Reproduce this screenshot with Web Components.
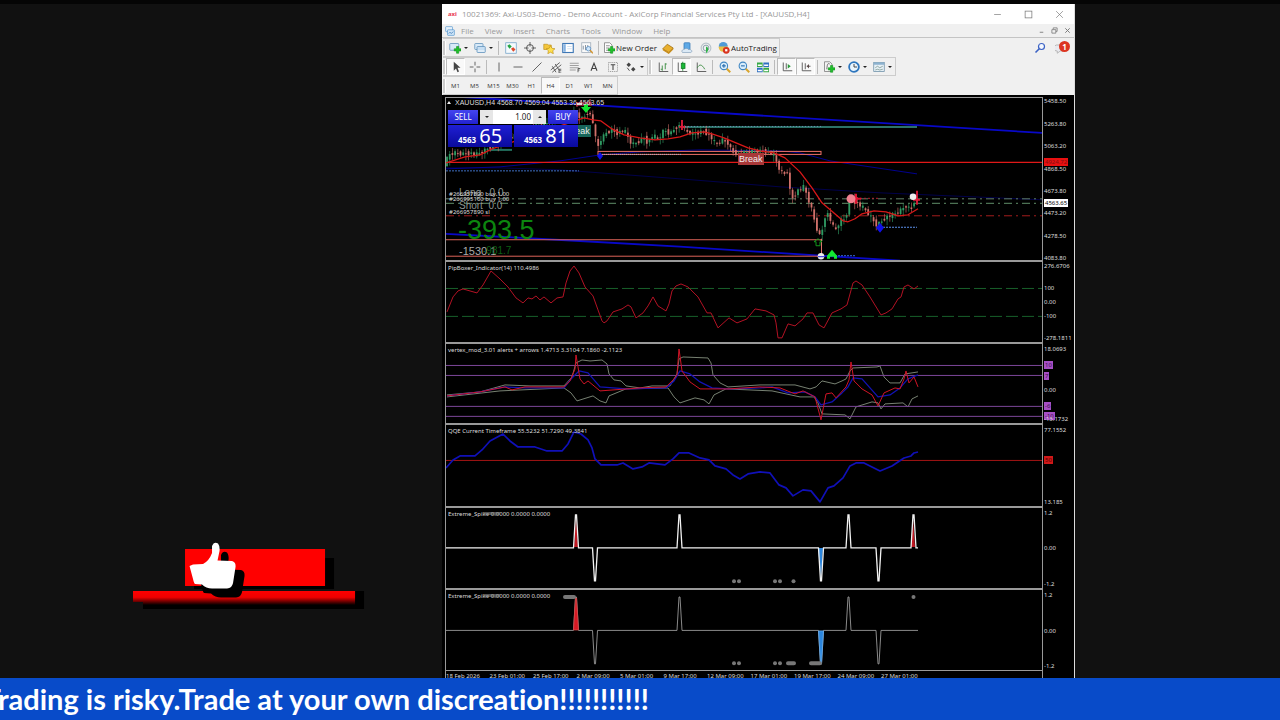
<!DOCTYPE html>
<html lang="en">
<head>
<meta charset="utf-8">
<title>Trading stream</title>
<style>
html,body{margin:0;height:100%;background:#111}
body{font-family:"Noto Sans","Open Sans",sans-serif;overflow:hidden}
</style>
</head>
<body>
<stream-scene></stream-scene>
<script>
const define = (name, html, setup) => {
  const tpl = document.createElement('template');
  tpl.innerHTML = html;
  customElements.define(name, class extends HTMLElement {
    connectedCallback() {
      if (this.shadowRoot) return;
      this.attachShadow({mode: 'open'}).append(tpl.content.cloneNode(true));
      if (setup) setup(this, this.shadowRoot);
    }
  });
};

/* ---------- icons, all on a 16 unit grid ---------- */
const plus = '<path d="M10 6h3v3h3v3h-3v3h-3v-3H7V9h3z" fill="#1fc02a" stroke="#0b8a17" stroke-width=".7"/>';
const line = (d, c = '#555', w = 1.2) => `<path d="${d}" fill="none" stroke="${c}" stroke-width="${w}"/>`;
const ICONS = {
  app: '<rect x="1" y="1" width="11" height="8" rx="1" fill="#e8f2fb" stroke="#4a90cc"/><rect x="4" y="6" width="11" height="9" rx="1" fill="#cfe4f7" stroke="#4a90cc"/>' + line('M6 12l2-2 2 2 3-3', '#2a6fb0'),
  newchart: '<rect x="1" y="2" width="12" height="9" rx="1" fill="#d7e9f8" stroke="#5b8db8"/>' + plus,
  profiles: '<rect x="1" y="2" width="11" height="8" rx="1" fill="#d7e9f8" stroke="#5b8db8"/><rect x="4" y="6" width="11" height="8" rx="1" fill="#c6def3" stroke="#5b8db8"/>' + line('M5 12h9', '#fff'),
  market: '<rect x="1" y="1" width="14" height="14" fill="#f5fafd" stroke="#6fa0c8"/><path d="M3 5l3-2 3 3-3 3z" fill="#26a544"/><path d="M8 9l3-2 3 3-3 3z" fill="#e04a2a"/>',
  navigator: '<circle cx="8" cy="8" r="4.6" fill="none" stroke="#555" stroke-width="1.3"/>' + line('M8 0v6M8 10v6M0 8h6M10 8h6'),
  star: '<path d="M1 3h5l1 1h4v6H1z" fill="#f4c63d" stroke="#b98a12" stroke-width=".8"/><path d="M10 5l2 3.4 4 .6-3 2.6.8 4-3.8-2-3.600 2 .8-4-3-2.600 4-.6z" fill="#ffe04d" stroke="#b98a12" stroke-width=".8"/>',
  terminal: '<rect x="1" y="2" width="14" height="12" fill="#fff" stroke="#3f78b5" stroke-width="1.500"/><path d="M2 3h3v10H2z" fill="#86b3e2"/>' + line('M7 6h6M7 9h6', '#b9cfe6', .8),
  tester: '<rect x="1" y="1" width="12" height="13" fill="#fafafa" stroke="#9aa7b5"/>' + line('M3 10V5M6 11V4M9 8V4', '#7a8a9a') + '<circle cx="10" cy="9" r="3" fill="#cfe6fa" stroke="#4d86bd"/>' + line('M12 11l4 4', '#d0932e', 2),
  order: '<path d="M2 1h7l3 3v10H2z" fill="#fff" stroke="#777"/>' + line('M4 5h5M4 8h5M4 11h3', '#888') + plus,
  book: '<path d="M1 9l6-6 8 5-6 6z" fill="#e9b02e" stroke="#9c6b0d"/><path d="M1 9v2l8 5 6-6V8l-6 6z" fill="#c98b17"/>',
  server: '<rect x="4" y="1" width="8" height="9" rx="1" fill="#5ea9e6" stroke="#3778b5"/><path d="M2 14c-2-2 0-4 2-4 1-2 5-2 6 0 4-1 6 3 3 4z" fill="#dbe9f5" stroke="#7796b4" stroke-width=".8"/>',
  signal: '<circle cx="8" cy="8" r="6.500" fill="none" stroke="#b7c2c9" stroke-width="1.500"/><circle cx="8" cy="8" r="3.800" fill="none" stroke="#8aa0ac" stroke-width="1.300"/><path d="M8 6c4 1 4 6 0 9z" fill="#32b34a"/>',
  auto: '<circle cx="7" cy="7" r="6" fill="#e9c045"/><path d="M1 6a6 6 0 0 1 12 0z" fill="#4e9bd8"/><circle cx="11" cy="11" r="4.500" fill="#d9341f"/><path d="M9.500 9.500h3v3h-3z" fill="#fff"/>',
  cursor: '<path d="M5 1v12l3-3 2 5 2-1-2-5h4z" fill="#444"/>',
  cross: line('M8 1v5M8 10v5M1 8h5M10 8h5'),
  vline: line('M8 2v12'), hline: line('M2 8h12'), trend: line('M2 14L14 2'),
  channel: line('M1 12L13 2M3 15L15 5M3 7l5 8M7 4l5 8') + line('M12 11h3M12 13h3M12 11v5h3'),
  fibo: line('M1 3h12M1 6h12M1 9h12M1 12h8', '#777', .9) + line('M12 15v-5h3M12 12h2'),
  text: line('M4 13L8 3l4 10M5.500 10h5', '#444', 1.500),
  label: '<rect x="2" y="2" width="12" height="12" fill="none" stroke="#888" stroke-dasharray="1.500 1"/>' + line('M5 5h6M8 5v7', '#444', 1.400),
  shapes: '<path d="M2 5l3-3 3 3-3 3zM8 11l3-3 3 3-3 3z" fill="#444"/>' + line('M3 9l3 4', '#444'),
  bars: line('M3 2v12h12') + line('M7 6v7M11 3v8M11 4h2M5 11h2', '#388a3d'),
  candles: line('M3 2v12h12') + line('M9 1v12', '#16892a') + '<rect x="7" y="3" width="5" height="7" fill="#18b835" stroke="#0d7a20"/>',
  area: line('M3 2v12h12') + line('M3 9c3-5 6-5 10 2', '#388a3d'),
  zoomin: line('M10 10l5 5', '#d9a52d', 2.600) + '<circle cx="6.500" cy="6.500" r="5" fill="#d8edfb" stroke="#3f86c2" stroke-width="1.400"/>' + line('M4 6.500h5M6.500 4v5', '#2a6fb0', 1.500),
  zoomout: line('M10 10l5 5', '#d9a52d', 2.600) + '<circle cx="6.500" cy="6.500" r="5" fill="#d8edfb" stroke="#3f86c2" stroke-width="1.400"/>' + line('M4 6.500h5', '#2a6fb0', 1.500),
  tile: '<path d="M0 2h7.500v6H0zM8.500 9H16v6H8.500z" fill="#36a845"/><path d="M8.500 2H16v6H8.500zM0 9h7.500v6H0z" fill="#2f6fc0"/><path d="M1 4.500h5.500v2H1zM9.500 4.500H15v2H9.500zM1 11.500h5.500v2H1zM9.500 11.500H15v2H9.500z" fill="#fff"/>',
  scroll: line('M3 2v11h12M7 3v8') + '<path d="M9 4l4 3-4 3z" fill="#2b9a3b"/>',
  shift: line('M3 2v11h12M7 3v8M14 7h-5') + '<path d="M12 4l-3 3 3 3z" fill="#5d4a4a"/>',
  indicators: '<path d="M2 1h7l3 3v10H2z" fill="#f4f4f4" stroke="#777"/>' + line('M5 11c1-8 1-8 4-7', '#666') + plus,
  clock: '<circle cx="8" cy="8" r="6.500" fill="#eaf5fd" stroke="#2c75bd" stroke-width="2.400"/>' + line('M8 4v4h4', '#333'),
  template: '<rect x="1" y="2" width="14" height="12" fill="#e6f0f6" stroke="#6a8ca5"/><path d="M1 2h14v3H1z" fill="#8cb2cf"/>' + line('M3 9l3-2 3 2 4-2M3 12l3-1 3 1 4-1', '#6c8b80', .9),
  search: '<circle cx="10" cy="6" r="4" fill="#f4f8ff" stroke="#3b62c4" stroke-width="1.600"/>' + line('M7 9l-5 5', '#3b62c4', 2.200),
  chat: '<path d="M2 4h9a3 3 0 0 1 0 8H7l-4 3v-3a4 4 0 0 1-1-8z" fill="#e9e9ee" stroke="#aaa"/>',
  min: line('M2 8h12', '#777'), max: '<rect x="2" y="2" width="12" height="12" fill="none" stroke="#777" stroke-width="1.300"/>',
  close: line('M2 2l12 12M14 2L2 14', '#777'), cmin: line('M4 12h8', '#777', 2),
  crest: line('M5 5V2h9v8h-3M2 6h9v8H2z', '#777', 1.800), cclose: line('M3 3l10 10M13 3L3 13', '#777', 2.200)
};
define('mt-icon', `<style>:host{display:block;width:12px;height:12px;flex:none}svg{display:block;width:100%;height:100%}</style><svg viewBox="0 0 16 16" aria-hidden="true"></svg>`,
  (el, r) => { r.querySelector('svg').innerHTML = ICONS[el.getAttribute('name')] || ''; });

/* ---------- toolbar parts ---------- */
define('tool-button', `<style>
:host{display:block;height:100%;flex:none;box-sizing:border-box}
button{all:unset;box-sizing:border-box;display:flex;align-items:center;justify-content:center;min-width:19px;height:100%;font-size:8px;line-height:12px;color:#222;white-space:nowrap}
:host([wide]) button{padding:0 2px;gap:1px}
:host([menu]) button{width:25px;gap:3px}
:host([frame]) button{font-size:6px;color:#333;font-weight:500}
:host([pressed]) button{background:#f9f9f9;border:1px solid #bbb;border-right-color:#fff;border-bottom-color:#fff}
i{display:none;border:2px solid transparent;border-top-color:#222;border-bottom:0}
:host([menu]) i{display:block}
</style><button type="button"><slot></slot><i></i></button>`,
  (el, r) => {
    const n = el.getAttribute('icon');
    if (!n) return;
    const icon = document.createElement('mt-icon');
    icon.setAttribute('name', n);
    r.querySelector('button').prepend(icon);
    if (!el.textContent) r.querySelector('button').setAttribute('aria-label', n);
  });
define('tool-gap', `<style>:host{display:flex;width:5px;height:14px;justify-content:center;flex:none}b{width:1px;background:#bbb}:host([grip]) b{width:2px;background:#ccc;border-right:1px solid #fff}:host([slim]){width:3px}</style><b></b>`);

define('window-head', `<style>
:host{display:block;background:#f0f0f0;color:#999;font-family:"Open Sans","Noto Sans",sans-serif}
header{display:flex;align-items:center;height:20px;background:#fff;font-size:8px;line-height:12px;padding:0 10px 0 6px;gap:5px}
header em{font:bold 6px/8px "Open Sans",sans-serif;color:#e8344e}
header span{flex:1;white-space:nowrap}
.ctl{display:flex;gap:22px}.ctl mt-icon{width:9px;height:9px}
.ctl button{all:unset}
nav{display:flex;align-items:center;height:13px;border-bottom:1px solid #c4c4c4;font-size:8px;line-height:12px;padding:0 3px}
nav a{color:inherit;text-decoration:none;margin-right:11px}
nav mt-icon{width:10px;height:10px;margin-right:6px}
nav .sp{flex:1}
nav .child{display:flex;gap:6px}nav .child mt-icon{width:7px;height:7px;margin:0}
.row{display:flex;align-items:center;height:19px;padding-left:1px;box-sizing:border-box}
.group{display:flex;align-items:center;height:100%;border:1px solid #ccc;border-left:0;box-sizing:border-box}
.sp{flex:1}
.end{display:flex;gap:9px;padding-right:7px;align-items:center}
.note{position:relative}
.note b{position:absolute;left:4px;top:-1px;width:11px;height:11px;border-radius:50%;background:#dc3520;color:#fff;font:bold 8px/11px "Noto Sans",sans-serif;text-align:center}
</style>
<header><em>axi</em><span>10021369: Axi-US03-Demo - Demo Account - AxiCorp Financial Services Pty Ltd - [XAUUSD,H4]</span>
<div class="ctl"><button aria-label="Minimize"><mt-icon name="min"></mt-icon></button><button aria-label="Maximize"><mt-icon name="max"></mt-icon></button><button aria-label="Close"><mt-icon name="close"></mt-icon></button></div></header>
<nav><mt-icon name="app"></mt-icon><a href="#">File</a><a href="#">View</a><a href="#">Insert</a><a href="#">Charts</a><a href="#">Tools</a><a href="#">Window</a><a href="#">Help</a><div class="sp"></div>
<div class="child"><mt-icon name="cmin"></mt-icon><mt-icon name="crest"></mt-icon><mt-icon name="cclose"></mt-icon></div></nav>
<div class="row"><div class="group"><tool-gap grip slim></tool-gap><tool-button menu icon="newchart"></tool-button><tool-button menu icon="profiles"></tool-button><tool-gap></tool-gap>
<tool-button icon="market"></tool-button><tool-button icon="navigator"></tool-button><tool-button icon="star"></tool-button><tool-button icon="terminal"></tool-button><tool-button icon="tester"></tool-button><tool-gap></tool-gap>
<tool-button wide icon="order">New Order</tool-button><tool-button icon="book"></tool-button><tool-button icon="server"></tool-button><tool-button icon="signal"></tool-button><tool-button wide icon="auto">AutoTrading</tool-button></div>
<div class="sp"></div><div class="end"><mt-icon name="search"></mt-icon><div class="note"><mt-icon name="chat"></mt-icon><b>1</b></div></div></div>
<div class="row"><div class="group"><tool-gap grip slim></tool-gap><tool-button pressed icon="cursor"></tool-button><tool-button icon="cross"></tool-button><tool-gap></tool-gap><tool-button icon="vline"></tool-button><tool-button icon="hline"></tool-button><tool-button icon="trend"></tool-button><tool-button icon="channel"></tool-button><tool-button icon="fibo"></tool-button><tool-button icon="text"></tool-button><tool-button icon="label"></tool-button><tool-button menu icon="shapes"></tool-button></div>
<div class="group"><tool-gap grip></tool-gap><tool-button icon="bars"></tool-button><tool-button pressed icon="candles"></tool-button><tool-button icon="area"></tool-button><tool-gap></tool-gap><tool-button icon="zoomin"></tool-button><tool-button icon="zoomout"></tool-button><tool-button icon="tile"></tool-button><tool-gap></tool-gap><tool-button pressed icon="scroll"></tool-button><tool-button pressed icon="shift"></tool-button><tool-gap></tool-gap><tool-button menu icon="indicators"></tool-button><tool-button menu icon="clock"></tool-button><tool-button menu icon="template"></tool-button></div></div>
<div class="row"><div class="group"><tool-gap grip slim></tool-gap><tool-button frame>M1</tool-button><tool-button frame>M5</tool-button><tool-button frame>M15</tool-button><tool-button frame>M30</tool-button><tool-button frame>H1</tool-button><tool-button frame pressed>H4</tool-button><tool-button frame>D1</tool-button><tool-button frame>W1</tool-button><tool-button frame>MN</tool-button></div></div>`);

/* ---------- chart pane: plot on the left, value scale on the right ---------- */
define('chart-pane', `<style>
:host{display:grid;grid-template-columns:1fr 31px;min-height:0;color:#ddd;font-size:6px;line-height:8px}
.plot{position:relative;border:1px solid #999;border-top-width:2px;border-bottom:0;overflow:hidden;min-height:0}
:host([first]) .plot{border-top-width:1px}
svg{position:absolute;inset:0;width:100%;height:100%}
.cap{position:absolute;left:2px;top:2px;white-space:nowrap}
.scale{position:relative;border-top:2px solid #000}
:host([first]) .scale{border-top-width:1px}
.scale span{position:absolute;left:1px;transform:translateY(-50%);white-space:nowrap}
.scale .tag{padding:0 1px}
</style><div class="plot"><svg preserveAspectRatio="none"></svg><div class="cap"></div><slot></slot></div><div class="scale"></div>`,
  (el, r) => {
    const box = el.getAttribute('box').split(' ').map(Number);
    const svg = r.querySelector('svg');
    svg.setAttribute('viewBox', box.join(' '));
    svg.innerHTML = DRAW[el.getAttribute('draw')]();
    r.querySelector('.cap').textContent = el.getAttribute('caption') || '';
    for (const item of el.getAttribute('scale').split(';')) {
      const [t, y, bg, fg] = item.split('@');
      const s = document.createElement('span');
      s.textContent = t;
      s.style.top = (y - box[1]) / box[3] * 100 + '%';
      if (bg) { s.className = 'tag'; s.style.background = bg; s.style.color = fg; }
      r.querySelector('.scale').append(s);
    }
  });

const poly = (pts, c, w = 1, extra = '') => `<polyline points="${pts}" fill="none" stroke="${c}" stroke-width="${w}" stroke-linejoin="round" ${extra}/>`;
const hl = (y, c, x1 = 446, x2 = 1042, extra = '') => `<line x1="${x1}" x2="${x2}" y1="${y}" y2="${y}" stroke="${c}" ${extra}/>`;
const PRICE = [[446,160],[450,153],[456,152],[462,153],[470,152],[476,154],[484,150],[492,145],[530,128],[575,112],[583,118],[588,110],[592,118],[594,126],[597,149],[600,140],[606,132],[612,129],[617,132],[624,129],[632,144],[638,141],[644,137],[648,142],[653,134],[658,139],[664,129],[670,133],[676,126],[682,124],[686,131],[694,133],[704,130],[710,135],[716,144],[722,139],[728,142],[732,151],[740,153],[750,151],[760,150],[768,151],[774,154],[778,166],[784,174],[787,169],[790,190],[793,198],[797,190],[804,186],[808,198],[812,210],[816,226],[821,238],[824,216],[828,213],[833,226],[836,229],[840,220],[846,218],[848,200],[852,198],[858,203],[864,208],[870,215],[876,224],[880,222],[886,216],[894,214],[900,210],[906,205],[911,209],[914,200],[918,201]];
const priceAt = x => {
  for (let i = 1; i < PRICE.length; i++) if (x <= PRICE[i][0]) {
    const [a, b] = PRICE[i - 1], [c, d] = PRICE[i];
    return b + (d - b) * (x - a) / (c - a);
  }
  return PRICE.at(-1)[1];
};
const spikes = (base, up, down, list, c, w) => {
  let d = `M446 ${base}`;
  for (const [x, dir] of list) d += `H${x - 2.5}L${x - .5} ${dir > 0 ? up : down}h1L${x + 2.5} ${base}`;
  return `<path d="${d}H918" fill="none" stroke="${c}" stroke-width="${w}"/>`;
};
const dots = (xs, y) => xs.map(x => `<circle cx="${x}" cy="${y}" r="2" fill="#777"/>`).join('');

const DRAW = {
  price() {
    let k = '';
    for (let i = 0, x = 447; x < 918; x += 2.7, i++) {
      const j = ((i * 37) % 11 - 5) * .45, o = priceAt(x - 2.7) - j, c = priceAt(x) + j;
      const col = c < o ? '#2f9a62' : '#d0706a', top = Math.min(o, c), h = Math.max(1, Math.abs(o - c));
      k += `<path d="M${x.toFixed(1)} ${(top - 1 - i * 7 % 5).toFixed(1)}V${(top + h + 1 + i * 5 % 6).toFixed(1)}" stroke="${col}" stroke-width=".7" opacity=".9"/><rect x="${(x - .9).toFixed(1)}" y="${top.toFixed(1)}" width="1.8" height="${h.toFixed(1)}" fill="${col}"/>`;
    }
    return poly('446,167 500,167 560,169 680,178 780,186 880,192 1042,199', '#00004a')
      + poly('446,168 500,166 560,160 600,154 640,151 700,149 780,150 800,152 830,160 870,166 917,173', '#00008f')
      + poly('445,95 1042,132', '#0808c8', 1.8) + poly('445,233 575,240 680,246 821,255 900,260', '#0808c8', 1.8)
      + hl(161.5, '#e01818', 446, 1042, 'stroke-width="1.200"') + hl(198, '#5f7f68', 446, 1042, 'stroke-dasharray="8 4 2 4"') + hl(202.500, '#5f8f68', 446, 1042, 'stroke-dasharray="8 4 2 4"')
      + hl(215, '#a51c1c', 446, 1042, 'stroke-dasharray="8 4 2 4"')
      + hl(170, '#3f6fc4', 446, 579, 'stroke-dasharray="2 1"') + hl(149, '#23705f', 490, 512, 'stroke-width="2"')
      + hl(126, '#2c7269', 682, 917, 'stroke-width="2"') + hl(125.5, '#6d8bb0', 682, 821, 'stroke-dasharray="1 2"')
      + '<rect x="598" y="150.500" width="223" height="3" fill="none" stroke="#f07068"/>' + hl(153.5, '#aab', 600, 682, 'stroke-dasharray="1 1"')
      + hl(239, '#dd6258', 446, 822) + hl(255.5, '#dd6258', 446, 822) + k
      + '<path d="M821.500 238V256" stroke="#e0736c"/>'
      + poly('446,162 465,156 480,154 492,148 510,142 575,120 584,117 593,119 601,120 612,128 624,134 640,137 655,139 668,138 680,136 692,132 704,131 712,133 724,137 736,142 748,147 760,150 774,152 785,157 800,171 812,187 822,202 836,214 843,220 848,221 855,218 862,213 874,210 886,211 898,215 908,214 918,208', '#d81818', 1.3)
      + hl(226.5, '#5b8fe8', 880, 917, 'stroke-dasharray="2 1"') + hl(255, '#3569d8', 835, 855, 'stroke-dasharray="2 1"') + hl(197.500, '#b02030', 856, 880, 'stroke-dasharray="2 2"')
      + '<path d="M576 101h16v4h-16z" fill="#802038"/><path d="M577 101v5M581 99v4M590 98v6" stroke="#e04050"/><path d="M577 103h5" stroke="#ddd" stroke-width="2"/>'
      + '<path d="M584 103h4v3h3l-5 6-5-6h3z" fill="#12e632"/><path d="M827 258v-3l5-6 5 6v3h-3v-2h-4v2z" fill="#12e632"/>'
      + '<path d="M816 241v4h4v-4h2l-4-3-4 3z" fill="none" stroke="#12961c"/>'
      + '<circle cx="821" cy="255.500" r="3.300" fill="#eee"/><path d="M818 256h6" stroke="#2222dd"/>'
      + '<path d="M856 193v10M853 198h8" stroke="#e01030" stroke-width="2"/><circle cx="851" cy="198" r="4.500" fill="#f08090"/>'
      + '<path d="M917 190v14M913 199h7M682 119v10M679 126h6" stroke="#e01838" stroke-width="1.800"/><circle cx="913" cy="196" r="3.300" fill="#eee"/>'
      + '<path d="M600 151l3 4-3 4-3-4zM880 222l4 5-4 5-4-5z" fill="#1010e8"/>';
  },
  pip() {
    return hl(287.500, '#17602a', 446, 1042, 'stroke-dasharray="12 4"') + hl(315.500, '#17602a', 446, 1042, 'stroke-dasharray="12 4"')
      + poly('447,311 453,296 458,290 463,288 470,290 477,292 483,284 491,270 500,278 508,286 516,297 523,302 528,297 532,298 536,295 540,299 544,296 551,302 557,297 563,296 566,282 570,270 574,265 579,272 585,286 593,295 598,309 602,320 604,322 607,320 613,311 622,308 628,304 631,306 636,317 643,312 648,305 653,296 658,305 666,310 669,303 672,290 676,285 681,283 688,286 698,296 707,312 711,312 718,327 729,317 737,322 747,318 755,308 766,310 774,314 776,322 778,337 782,337 788,323 795,325 803,318 807,312 813,312 819,324 824,327 832,312 841,308 847,304 850,293 853,282 856,280 862,284 870,296 881,314 886,312 892,308 898,298 901,296 904,286 908,284 914,288 918,285', '#b41224');
  },
  vertex() {
    return poly('447,394 480,391 505,384 530,385 564,385 572,376 576,362 582,359 590,360 602,359 607,363 609,373 614,379 621,380 626,385 640,387 652,385 670,385 677,373 679,358 683,356 708,357 711,362 713,374 720,382 728,386 760,384 795,384 810,388 816,386 822,380 835,383 842,380 846,378 850,370 853,367 877,366 880,365 884,376 890,382 900,382 905,373 918,371', '#85907f', .9)
      + poly('447,396 500,390 564,387 571,392 577,400 593,395 600,400 606,402 609,395 626,388 668,387 674,396 680,402 695,397 704,399 709,403 714,394 726,388 772,390 800,396 814,396 818,402 822,413 845,414 850,418 856,406 872,401 878,402 881,408 885,403 903,402 908,406 912,398 918,395', '#85907f', .9)
      + hl(364.500, '#7c479a') + hl(374.500, '#7c479a') + hl(405.500, '#7c479a') + hl(415.500, '#7c479a')
      + poly('447,395 480,391 505,386 525,387 564,387 572,377 579,370 588,372 600,386 626,388 666,387 674,380 680,370 690,373 700,381 712,387 728,388 760,387 772,386 788,392 805,391 815,396 821,404 832,401 842,392 848,386 853,377 862,378 870,387 878,396 890,394 900,387 908,378 918,374', '#1212b4', 1.3)
      + poly('447,395 480,391 505,386 512,389 525,386 564,386 570,380 575,368 576,354 580,378 584,383 588,380 600,390 640,387 666,386 674,378 677,374 679,348 682,370 690,381 700,388 728,388 760,386 780,387 795,393 803,390 815,396 821,419 826,393 832,392 836,397 846,386 849,379 851,361 854,380 862,388 872,394 878,405 884,392 895,387 900,388 904,378 906,370 909,382 914,376 918,386', '#d01426');
  },
  qqe() {
    return hl(460.500, '#a31414') + poly('446,468 453,460 460,456 475,456 482,450 490,441 503,434 510,441 518,447 535,447 547,451 562,451 568,444 574,432 581,434 588,440 592,448 595,459 601,465 617,465 623,463 633,469 642,467 649,463 665,465 673,459 679,453 689,453 700,458 709,460 715,466 726,469 733,475 740,479 748,474 760,472 770,473 779,485 786,488 793,496 803,490 811,491 820,502 828,488 834,486 843,478 850,466 856,463 864,463 872,467 880,471 892,466 904,458 911,456 914,453 918,452', '#1010b8', 1.7);
  },
  spike1() {
    return '<path d="M574 547l2-30 2 30zM911 547l2-28 2 28z" fill="#c01822"/><path d="M818 548h5l-2 32z" fill="#2c86dd"/>'
      + spikes(548, 515, 581, [[576,1],[595,-1],[679.5,1],[821,-1],[848.5,1],[878.5,-1],[913.5,1]], '#f2f2f2', 1.3) + dots([734,739,775,780,793.5], 581.5);
  },
  spike2() {
    return spikes(630.5, 597, 664, [[576,1],[595,-1],[679.5,1],[821,-1],[848.5,1],[878.5,-1]], '#999', .9)
      + '<path d="M573.500 630l2-32h1l2 32z" fill="#d81824" stroke="#d84848" stroke-width=".8"/><path d="M818.500 631h5l-2 33h-1z" fill="#2c86dd" stroke="#65adf0" stroke-width=".8"/>'
      + dots([734,739,775,780], 663.5) + dots([913.5], 597)
      + '<path d="M565 597h9M788 663.500h6M811 663.500h9" stroke="#777" stroke-width="4" stroke-linecap="round"/>';
  }
};

/* ---------- one-click trading panel ---------- */
define('trade-panel', `<style>
:host{display:grid;grid-template-columns:1fr 1fr;gap:1px 2px;width:130px;color:#fff}
button{all:unset;box-sizing:border-box;background:linear-gradient(#4545f0,#2222cf);text-align:center;font-size:8px;line-height:14px;height:14px;width:30px}
.top{grid-column:1/3;display:flex;justify-content:space-between}
.vol{display:flex;width:66px;background:#fff}
.vol button{width:13px;background:#e6e6e6;display:grid;place-items:center}
.vol i{border:2px solid transparent;border-top-color:#222;border-bottom:0}.vol .up{transform:rotate(180deg)}
input{all:unset;box-sizing:border-box;flex:1;min-width:0;width:40px;height:14px;text-align:right;font-size:8px;line-height:14px;color:#222;padding-right:2px}
.p{display:flex;align-items:baseline;justify-content:center;gap:3px;height:22px;background:linear-gradient(#1f1fd4,#0a0a9c);font:bold 8px/22px "Noto Sans",sans-serif}
.p b{font:400 20px/22px "Noto Sans",sans-serif}
</style><div class="top"><button>SELL</button><div class="vol"><button aria-label="Less"><i></i></button><input aria-label="Volume" value="1.00"><button aria-label="More"><i class="up"></i></button></div><button>BUY</button></div>
<div class="p"><span>4563</span><b>65</b></div><div class="p"><span>4563</span><b>81</b></div>`);

define('chart-stack', `<style>
:host{display:grid;grid-template-rows:163fr 82fr 82fr 83fr 82fr 82fr 8px;min-height:0;background:#000;padding:2px 0 0 3px}
chart-pane *{position:absolute;white-space:nowrap}
.tri{left:1px;top:3px;border:2px solid transparent;border-bottom:3px solid #eee;border-top:0}
.sym{left:9px;top:0;font:7px/9px "Liberation Sans",sans-serif}
trade-panel{left:2px;top:12px}
.brk{left:49%;top:34%;background:#a93838;color:#eee;font:9px/12px "Liberation Sans",sans-serif;padding:0 1px}
.brk.old{left:20%;top:17%;background:#17665a}
.o{left:3px;color:#ddd}
.o1{top:57%}.o2{top:60%}.o3{top:68%}
.g{left:13px;color:#8d9692;font:10px/12px "Liberation Sans",sans-serif;white-space:pre}
.g1{top:55%}.g2{top:63%}
.sum{left:12px;top:73%;color:#0c850f;font:27px/28px "Liberation Sans",sans-serif}
.s2{left:13px;top:91%;color:#aaa;font:11px/12px "Liberation Sans",sans-serif}
.s3{left:37px;top:91%;color:#0b5f14;font:10px/12px "Liberation Sans",sans-serif}
.ghost{left:38px;top:4px;width:16px;height:3px;background:#888;opacity:.6}
.time{display:grid;grid-template-columns:1fr 31px}
.time div{display:flex;border:1px solid #999;border-bottom:0;overflow:hidden;height:7px;color:#ddd;font-size:6px;line-height:8px}
.time span{flex:0 0 7.300%;white-space:nowrap;padding-top:1px}
</style>
<chart-pane first box="446 97 596 162" draw="price" scale="5458.50@100.500;5263.80@123;5063.20@145;4868.50@168;4924.72@161@#e81010@#801010;4673.80@190;4563.65@202.500@#fff@#000;4473.20@212.500;4278.50@235;4083.80@257">
<i class="tri"></i><span class="sym">XAUUSD,H4 4568.70 4569.04 4553.36 4563.65</span>
<span class="brk old">Break</span><span class="brk">Break</span><trade-panel></trade-panel>
<span class="g g1">Long   0.0</span><span class="o o1">#266957890 buy 1.00</span><span class="o o2">#266995160 buy 1.00</span><span class="g g2">Short  0.0</span><span class="o o3">#266957890 sl</span>
<span class="sum">-393.5</span><span class="s2">-1530.1</span><span class="s3">-981.7</span></chart-pane>
<chart-pane box="446 261 596 80" draw="pip" caption="PipBoxer_Indicator(14) 110.4986" scale="276.6706@265.500;100@287;0.00@301.500;-100@315.500;-278.1811@337"></chart-pane>
<chart-pane box="446 343 596 80" draw="vertex" caption="vertex_mod_3.01 alerts + arrows 1.4713 3.3104 7.1860 -2.1123" scale="18.0693@348;10@364.500@#a64fc4@#3a1048;7@375@#a64fc4@#3a1048;0.00@390;-6@405.500@#a64fc4@#3a1048;-10@415.500@#a64fc4@#3a1048;-13.1732@419"></chart-pane>
<chart-pane box="446 425 596 81" draw="qqe" caption="QQE Current Timeframe 55.5232 51.7290 49.3841" scale="77.1552@430;50@460@#d01818@#500;13.185@501.500"></chart-pane>
<chart-pane box="446 508 596 80" draw="spike1" caption="Extreme_Spike 0.0000 0.0000 0.0000" scale="1.2@512.500;0.00@548;-1.2@583.500"><i class="ghost"></i></chart-pane>
<chart-pane box="446 590 596 80" draw="spike2" caption="Extreme_Spike 0.0000 0.0000 0.0000" scale="1.2@594.500;0.00@630.500;-1.2@666"><i class="ghost"></i></chart-pane>
<div class="time"><div><span>18 Feb 2026</span><span>23 Feb 01:00</span><span>25 Feb 17:00</span><span>2 Mar 09:00</span><span>5 Mar 01:00</span><span>9 Mar 17:00</span><span>12 Mar 09:00</span><span>17 Mar 01:00</span><span>19 Mar 17:00</span><span>24 Mar 09:00</span><span>27 Mar 01:00</span></div></div>`);

/* ---------- like badge on the left of the scene ---------- */
define('like-badge', `<style>:host{display:block}svg{display:block;width:100%}</style>
<svg viewBox="133 541 232 70" role="img" aria-label="Like">
<defs><linearGradient id="g" x1="0" y1="0" x2="0" y2="1"><stop offset="0" stop-color="#f00"/><stop offset=".45" stop-color="#e00"/><stop offset="1" stop-color="#000"/></linearGradient>
<path id="t" d="M193 564.500L203 564Q209 561 212 553L212 546Q214 541 218 543.500Q220 546 219.500 551L217.500 560.500L232 561Q236 562 235.500 567L233 583Q232 588 227 588.500H212Q206 588.500 202 584.500L195 584Q194 583.500 193 579L189.500 566Z"/></defs>
<path d="M194 558h140v31H194zM143 591h221v18H143z" fill="#000"/>
<path d="M185 549h140v37H185z" fill="#f00"/>
<path d="M133 591h222v14H133z" fill="url(#g)"/><path d="M133 602h10v4h-10z" fill="#111"/>
<use href="#t" x="9" y="9" fill="#000"/><use href="#t" fill="#fff"/></svg>`);

define('news-ticker', `<style>
:host{display:block;background:#084bc9;color:#fff;height:42px;overflow:hidden}
div{display:flex;justify-content:flex-end;width:50.700%;white-space:nowrap;font:bold 29px/42px Lato,sans-serif;font-variant-ligatures:none}
</style><div><span><slot></slot></span></div>`);

define('stream-scene', `<style>
:host{display:flex;flex-direction:column;height:100vh;background:#111}
main{flex:1;min-height:0;display:grid;grid-template-columns:442fr 633fr 205fr;border-top:4px solid #050505;box-sizing:border-box}
aside{display:flex;align-items:flex-end;padding:0 17.500% 67px 30%}
like-badge{flex:1}
section{display:flex;flex-direction:column;min-height:0;min-width:0;border-right:1px solid #ddd;overflow:hidden;background:#000}
chart-stack{flex:1}
</style><main><aside><like-badge></like-badge></aside><section><window-head></window-head><chart-stack></chart-stack></section></main>
<news-ticker>Trading is risky.Trade at your own discreation!!!!!!!!!!!</news-ticker>`);
</script>
</body>
</html>
